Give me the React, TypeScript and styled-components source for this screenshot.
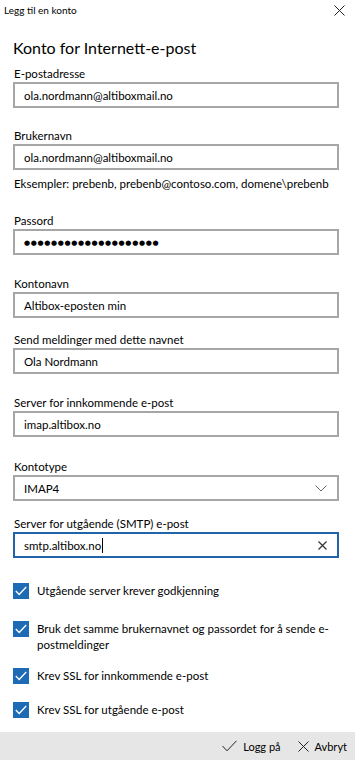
import React from 'react'
import styled, { createGlobalStyle } from 'styled-components'

const GlobalStyle = createGlobalStyle`
  html, body {
    margin: 0;
    padding: 0;
    background: #ffffff;
  }
  body {
    font-family: Lato, "Open Sans", "Liberation Sans", sans-serif;
    color: #000000;
  }
`

type FieldProps = {
  label: string;
  value: string;
  top: number;
  focused?: boolean;
  select?: boolean;
  password?: boolean;
}

const Field = ({ label, value, top, focused, select, password }: FieldProps) => (
  <FieldWrap $top={top}>
    <Label>{label}</Label>
    <InputBox $focused={focused}>
      {password ? (
        <Dots>{value}</Dots>
      ) : (
        <InputText>
          {value}
          {focused && <Caret />}
        </InputText>
      )}
      {select && (
        <svg width="12" height="7" viewBox="0 0 12 7">
          <path d="M0.5 0.5 L6 6 L11.5 0.5" fill="none" stroke="#666" strokeWidth="1" />
        </svg>
      )}
      {focused && (
        <svg width="9" height="9" viewBox="0 0 9 9">
          <path d="M0.5 0.5 L8.5 8.5 M8.5 0.5 L0.5 8.5" fill="none" stroke="#333" strokeWidth="1.2" />
        </svg>
      )}
    </InputBox>
  </FieldWrap>
)

const CheckRow = ({ text, top }: { text: string; top: number }) => (
  <CheckItem $top={top}>
    <CheckBox>
      <svg width="12" height="10" viewBox="0 0 12 10">
        <path d="M0.8 5 L4.2 8.5 L11.2 1" fill="none" stroke="#ffffff" strokeWidth="1.3" />
      </svg>
    </CheckBox>
    <CheckText>{text}</CheckText>
  </CheckItem>
)

const App = () => {
  return (
    <Page>
      <GlobalStyle />
      <TitleBar>
        <TitleText>Legg til en konto</TitleText>
        <svg width="11" height="11" viewBox="0 0 11 11">
          <path d="M0.5 0.5 L10.5 10.5 M10.5 0.5 L0.5 10.5" fill="none" stroke="#222" strokeWidth="1" />
        </svg>
      </TitleBar>
      <Content>
        <Heading>Konto for Internett-e-post</Heading>
        <Field label="E-postadresse" value="ola.nordmann@altiboxmail.no" top={4} />
        <Field label="Brukernavn" value="ola.nordmann@altiboxmail.no" top={18} />
        <Hint>Eksempler: prebenb, prebenb@contoso.com, domene\prebenb</Hint>
        <Field label="Passord" value="●●●●●●●●●●●●●●●●●●●●" top={19} password />
        <Field label="Kontonavn" value="Altibox-eposten min" top={19} />
        <Field label="Send meldinger med dette navnet" value="Ola Nordmann" top={12} />
        <Field label="Server for innkommende e-post" value="imap.altibox.no" top={19} />
        <Field label="Kontotype" value="IMAP4" top={20} select />
        <Field label="Server for utgående (SMTP) e-post" value="smtp.altibox.no" top={13} focused />
        <CheckList>
          <CheckRow top={0} text="Utgående server krever godkjenning" />
          <CheckRow top={22} text="Bruk det samme brukernavnet og passordet for å sende e-postmeldinger" />
          <CheckRow top={15} text="Krev SSL for innkommende e-post" />
          <CheckRow top={18} text="Krev SSL for utgående e-post" />
        </CheckList>
      </Content>
      <Footer>
        <FooterButton>
          <svg width="15" height="12" viewBox="0 0 15 12">
            <path d="M0.5 6 L5 10.8 L14.5 0.8" fill="none" stroke="#222" strokeWidth="1" />
          </svg>
          Logg på
        </FooterButton>
        <FooterButton>
          <svg width="11" height="11" viewBox="0 0 11 11">
            <path d="M0.5 0.5 L10.5 10.5 M10.5 0.5 L0.5 10.5" fill="none" stroke="#222" strokeWidth="1" />
          </svg>
          Avbryt
        </FooterButton>
      </Footer>
    </Page>
  )
}

const Page = styled.div`
  width: 355px;
  height: 760px;
  display: flex;
  flex-direction: column;
  background: #ffffff;
  overflow: hidden;
`

const TitleBar = styled.div`
  height: 20px;
  padding: 0 10px 0 4px;
  display: flex;
  align-items: center;
  justify-content: space-between;
`

const TitleText = styled.span`
  font-size: 10px;
  color: #000000;
`

const Content = styled.div`
  flex: 1;
  padding: 0 16px 0 13px;
  display: flex;
  flex-direction: column;
`

const Heading = styled.h1`
  margin: 16px 0 0 0;
  font-size: 16px;
  font-weight: 400;
  line-height: 24px;
`

const FieldWrap = styled.div<{ $top: number }>`
  margin-top: ${p => p.$top}px;
  display: flex;
  flex-direction: column;
`

const Label = styled.div`
  font-size: 11.5px;
  line-height: 16px;
  padding: 2px 0 0 1px;
`

const InputBox = styled.div<{ $focused?: boolean }>`
  height: 26px;
  box-sizing: border-box;
  border: 2px solid ${p => (p.$focused ? '#1f65a8' : '#a6a6a6')};
  padding: 0 10px 0 9px;
  display: flex;
  align-items: center;
  justify-content: space-between;
`

const InputText = styled.span`
  font-size: 11.5px;
  display: flex;
  align-items: center;
`

const Caret = styled.span`
  display: inline-block;
  width: 1px;
  height: 15px;
  background: #000000;
  margin-left: 1px;
`

const Dots = styled.span`
  font-family: "DejaVu Sans", sans-serif;
  font-size: 7px;
  letter-spacing: 0.65px;
  padding-top: 1px;
`

const Hint = styled.div`
  margin-top: 6px;
  font-size: 11.5px;
  line-height: 16px;
  padding-left: 1px;
`

const CheckList = styled.div`
  margin-top: 25px;
  display: flex;
  flex-direction: column;
`

const CheckItem = styled.div<{ $top: number }>`
  margin-top: ${p => p.$top}px;
  display: flex;
  align-items: flex-start;
  gap: 8px;
`

const CheckBox = styled.div`
  width: 16px;
  height: 16px;
  flex-shrink: 0;
  background: #1e6bb5;
  display: flex;
  align-items: center;
  justify-content: center;
`

const CheckText = styled.div`
  font-size: 11.5px;
  line-height: 16px;
`

const Footer = styled.div`
  height: 28px;
  background: #e6e6e6;
  display: flex;
  align-items: center;
  justify-content: flex-end;
  gap: 17px;
  padding-right: 8px;
`

const FooterButton = styled.div`
  display: flex;
  align-items: center;
  gap: 6px;
  font-size: 11px;
`

export default App
